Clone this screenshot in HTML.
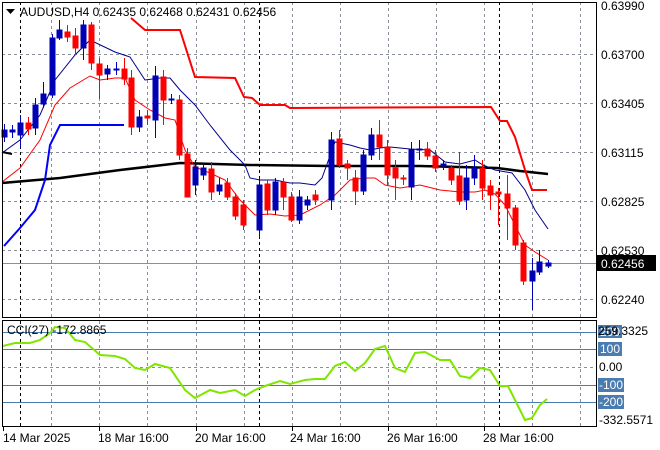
<!DOCTYPE html><html><head><style>body{margin:0;background:#fff}svg{display:block;font-family:"Liberation Sans",sans-serif}</style></head><body>
<svg width="660" height="450" viewBox="0 0 660 450" xmlns="http://www.w3.org/2000/svg">
<rect width="660" height="450" fill="#fff"/>
<g stroke="#8a8f99" stroke-dasharray="3,3" stroke-width="1">
<path d="M51.5 2V317M99.5 2V317M147.5 2V317M196.5 2V317M244.5 2V317M292.5 2V317M340.5 2V317M388.5 2V317M436.5 2V317M484.5 2V317M532.5 2V317M580.5 2V317"/>
<path d="M51.5 321V426M99.5 321V426M147.5 321V426M196.5 321V426M244.5 321V426M292.5 321V426M340.5 321V426M388.5 321V426M436.5 321V426M484.5 321V426M532.5 321V426M580.5 321V426"/>
<path d="M2 54.5H597M2 103.5H597M2 152.5H597M2 201.5H597M2 250.5H597M2 299.5H597M2 367.5H597"/>
</g>
<g stroke="#000" stroke-dasharray="3,3"><path d="M20.5 2V317M259.5 2V317M499.5 2V317M20.5 321V426M259.5 321V426M499.5 321V426"/></g>
<path d="M2 263.5H597" stroke="#8a8f99"/>
<g stroke="#4a7cb0"><path d="M2 332.5H597M2 349.5H597M2 385.5H597M2 402.5H597"/></g>
<!-- indicators -->
<polyline fill="none" stroke="#000" stroke-width="2.5" points="2,183 60,178 120,170 180,163 250,165 330,166 420,166 497,168 520,171 548,174"/>
<polyline fill="none" stroke="#000" stroke-width="2" points="2,152 12,154"/>
<polyline fill="none" stroke="#00008b" stroke-width="1" points="2,153 20,140 40,115 55,80 75,55 90,40 115,52 130,57 145,80 160,78 170,78 180,90 195,105 210,125 230,150 245,165 250,178 260,180 275,180 290,183 300,183 315,185 322,178 335,142 350,145 360,148 370,150 380,148 390,147 410,149 430,150 445,162 460,164 475,160 483,165 495,170 512,173 525,190 535,210 548,229"/>
<polyline fill="none" stroke="#ff0000" stroke-width="1" points="2,182 20,168 40,140 55,105 70,88 90,76 100,80 115,78 125,78 135,100 150,110 165,118 175,120 185,150 195,167 210,173 225,180 240,200 255,215 270,214 285,216 300,215 320,205 335,195 350,180 365,178 375,178 385,185 400,188 420,185 440,190 460,192 475,192 485,190 495,194 505,205 515,225 525,245 535,252 548,260"/>
<polyline fill="none" stroke="#ff0000" stroke-width="2" points="131,18 145,30 180,30 195,77 235,78 244,97 252,98 260,105 285,105 290,108 491,107 500,121 507,121 515,137 525,170 532,190 547,190"/>
<polyline fill="none" stroke="#0000ff" stroke-width="2" points="4,246 20,228 35,210 45,180 50,145 60,125 124,125"/>
<!-- candles -->
<g id="c"></g>
<g stroke-width="1">
<script>/*no*/</script>
</g>
<g>
<!-- blue candles -->
<g fill="#0000b4" stroke="#0000b4">
<path d="M4.5 124V142M12.5 125V138M20.5 115V148M35.5 98V135M43.5 82V108M52.5 34V98M59.5 20V40M83.5 20V60M107.5 65V80M116.5 62V75M139.5 110V132M155.5 66V138M171.5 94V104M195.5 160V195M203.5 163V180M219.5 178V195M259.5 178V238M275.5 178V215M299.5 190V224M307.5 196V210M331.5 132V210M363.5 150V195M371.5 128V160M411.5 142V200M419.5 140V160M443.5 160V170M466.5 165V210M474.5 155V185M532.5 258V310M539.5 250V275M548.5 260V268" fill="none"/>
<rect x="2" y="130" width="5" height="7"/><rect x="10" y="130" width="5" height="2"/><rect x="18" y="123" width="5" height="12"/><rect x="33" y="105" width="5" height="23"/><rect x="41" y="94" width="5" height="10"/><rect x="50" y="38" width="5" height="57"/><rect x="57" y="30" width="5" height="8"/><rect x="81" y="25" width="5" height="23"/><rect x="105" y="69" width="5" height="5"/><rect x="114" y="69" width="5" height="1"/><rect x="137" y="117" width="5" height="10"/><rect x="153" y="76" width="5" height="44"/><rect x="169" y="99" width="5" height="1"/><rect x="193" y="167" width="5" height="18"/><rect x="201" y="168" width="5" height="7"/><rect x="217" y="185" width="5" height="6"/><rect x="257" y="185" width="5" height="45"/><rect x="273" y="182" width="5" height="28"/><rect x="297" y="197" width="5" height="23"/><rect x="305" y="200" width="5" height="5"/><rect x="329" y="140" width="5" height="60"/><rect x="361" y="155" width="5" height="36"/><rect x="369" y="135" width="5" height="20"/><rect x="409" y="150" width="5" height="37"/><rect x="417" y="149" width="5" height="1"/><rect x="441" y="164" width="5" height="2"/><rect x="464" y="178" width="5" height="22"/><rect x="472" y="168" width="5" height="10"/><rect x="530" y="271" width="5" height="10"/><rect x="537" y="262" width="5" height="10"/><rect x="546" y="263" width="5" height="3"/>
</g>
<g fill="#ff0000" stroke="#ff0000">
<path d="M28.5 117V135M67.5 25V42M75.5 28V55M91.5 22V70M99.5 58V99M124.5 58V85M131.5 70V135M147.5 110V125M163.5 70V125M179.5 95V160M187.5 148V195M211.5 162V200M227.5 178V200M235.5 193V220M243.5 200V230M267.5 180V215M283.5 178V210M291.5 192V222M315.5 190V205M339.5 130V168M347.5 160V180M355.5 170V205M379.5 120V160M387.5 140V185M395.5 160V200M403.5 175V185M427.5 142V160M435.5 150V172M451.5 165V185M459.5 152V205M482.5 160V200M490.5 180V210M498.5 188V225M507.5 175V240M515.5 205V250M523.5 240V285" fill="none"/>
<rect x="26" y="123" width="5" height="6"/><rect x="65" y="32" width="5" height="5"/><rect x="73" y="36" width="5" height="12"/><rect x="89" y="25" width="5" height="38"/><rect x="97" y="64" width="5" height="11"/><rect x="122" y="69" width="5" height="10"/><rect x="129" y="78" width="5" height="49"/><rect x="145" y="116" width="5" height="2"/><rect x="161" y="77" width="5" height="23"/><rect x="177" y="100" width="5" height="55"/><rect x="185" y="154" width="5" height="43"/><rect x="209" y="169" width="5" height="23"/><rect x="225" y="183" width="5" height="14"/><rect x="233" y="197" width="5" height="19"/><rect x="241" y="205" width="5" height="20"/><rect x="265" y="184" width="5" height="26"/><rect x="281" y="182" width="5" height="15"/><rect x="289" y="197" width="5" height="23"/><rect x="313" y="195" width="5" height="5"/><rect x="337" y="139" width="5" height="26"/><rect x="345" y="164" width="5" height="4"/><rect x="353" y="178" width="5" height="13"/><rect x="377" y="135" width="5" height="12"/><rect x="385" y="147" width="5" height="28"/><rect x="393" y="168" width="5" height="10"/><rect x="401" y="178" width="5" height="1"/><rect x="425" y="149" width="5" height="7"/><rect x="433" y="156" width="5" height="12"/><rect x="449" y="168" width="5" height="12"/><rect x="457" y="176" width="5" height="25"/><rect x="480" y="168" width="5" height="20"/><rect x="488" y="186" width="5" height="9"/><rect x="496" y="192" width="5" height="2"/><rect x="505" y="194" width="5" height="14"/><rect x="513" y="208" width="5" height="37"/><rect x="521" y="243" width="5" height="38"/>
</g>
</g>
<!-- CCI -->
<polyline fill="none" stroke="#7fe600" stroke-width="2" points="3,346 15,343 30,343 40,340 50,333 55,327 65,328 75,340 85,342 100,355 115,356 125,359 135,368 145,370 155,364 170,368 185,390 195,398 210,390 220,393 235,390 245,396 255,390 265,386 280,381 290,384 305,380 315,379 325,379 335,366 345,362 355,371 365,363 375,349 385,346 395,368 405,372 415,353 425,352 440,360 450,360 460,376 470,378 480,368 490,370 500,386 508,386 515,400 525,420 532,418 540,405 547,399"/>
<!-- borders -->
<rect x="2.5" y="2.5" width="594" height="315" fill="none" stroke="#000"/>
<rect x="2.5" y="320.5" width="594" height="106" fill="none" stroke="#000"/>
<!-- price axis -->
<g font-size="12" fill="#000">
<text x="601" y="10">0.63990</text><text x="601" y="59">0.63700</text><text x="601" y="108">0.63405</text><text x="601" y="157">0.63115</text><text x="601" y="206">0.62825</text><text x="601" y="255">0.62530</text><text x="601" y="304">0.62240</text>
</g>
<rect x="597" y="255" width="59" height="16" fill="#000"/><text x="601" y="268" font-size="12" fill="#fff">0.62456</text>
<g fill="#4a7cb0"><rect x="598" y="325" width="24" height="13"/><rect x="598" y="342" width="24" height="14"/><rect x="598" y="378" width="26" height="14"/><rect x="598" y="395" width="26" height="14"/></g>
<g font-size="12"><text x="600" y="336" fill="#fff">200</text><text x="598" y="335" fill="#000">259.3325</text><text x="600" y="353" fill="#fff">100</text><text x="599" y="371" fill="#000">0.00</text><text x="599" y="389" fill="#fff">-100</text><text x="599" y="406" fill="#fff">-200</text><text x="599" y="424" fill="#000">-332.5571</text></g>
<text x="7" y="334" font-size="12" fill="#000">CCI(27) -172.8865</text>
<path d="M6 9h9l-4.5 5z" fill="#000"/>
<text x="20" y="16" font-size="12" fill="#000">AUDUSD,H4  0.62435 0.62468 0.62431 0.62456</text>
<g font-size="12" fill="#000"><text x="3" y="442">14 Mar 2025</text><text x="98" y="442">18 Mar 16:00</text><text x="195" y="442">20 Mar 16:00</text><text x="290" y="442">24 Mar 16:00</text><text x="387" y="442">26 Mar 16:00</text><text x="483" y="442">28 Mar 16:00</text></g>
<path d="M3.5 426v5M99.5 426v5M196.5 426v5M292.5 426v5M388.5 426v5M484.5 426v5" stroke="#000"/>
</svg>
</body></html>
